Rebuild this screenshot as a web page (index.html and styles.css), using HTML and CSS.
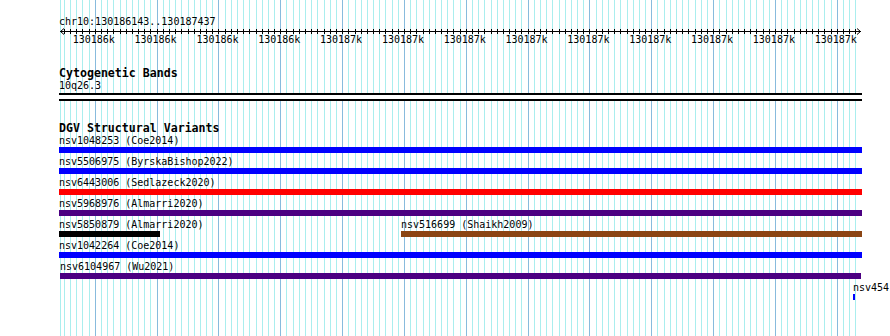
FILE: index.html
```html
<!DOCTYPE html>
<html lang="en">
<head>
<meta charset="utf-8">
<title>Genome browser</title>
<link rel="stylesheet" href="styles.css">
</head>
<body>
<div class="view">
  <svg class="grid" id="grid" width="803" height="336" aria-hidden="true"></svg>

  <div class="ruler">
    <div class="locus">chr10:130186143..130187437</div>
    <svg class="scale" id="scale" width="803" height="6" aria-hidden="true">
      <rect class="axis" x="1" y="3" width="801" height="1"></rect>
      <path class="arrow" d="M5 0.5 L1.5 3.5 L5 6.5"></path>
      <path class="arrow" d="M798 0.5 L801.5 3.5 L798 6.5"></path>
    </svg>
    <div class="ticklabels">
      <span class="ticklabel" style="left:13.7px">130186k</span>
      <span class="ticklabel" style="left:75.5px">130186k</span>
      <span class="ticklabel" style="left:137.4px">130186k</span>
      <span class="ticklabel" style="left:199.2px">130186k</span>
      <span class="ticklabel" style="left:261.0px">130187k</span>
      <span class="ticklabel" style="left:322.9px">130187k</span>
      <span class="ticklabel" style="left:384.7px">130187k</span>
      <span class="ticklabel" style="left:446.5px">130187k</span>
      <span class="ticklabel" style="left:508.3px">130187k</span>
      <span class="ticklabel" style="left:570.2px">130187k</span>
      <span class="ticklabel" style="left:632.0px">130187k</span>
      <span class="ticklabel" style="left:693.8px">130187k</span>
      <span class="ticklabel" style="left:755.7px">130187k</span>
    </div>
  </div>

  <section class="track cyto">
    <h2 class="track-title">Cytogenetic Bands</h2>
    <div class="band-name">10q26.3</div>
    <div class="band"></div>
  </section>

  <section class="track dgv">
    <h2 class="track-title">DGV Structural Variants</h2>

    <div class="row">
      <div class="feat" style="margin-left:0;width:803px">
        <div class="flabel">nsv1048253 (Coe2014)</div>
        <div class="fbar blue"></div>
      </div>
    </div>
    <div class="row">
      <div class="feat" style="margin-left:0;width:803px">
        <div class="flabel">nsv5506975 (ByrskaBishop2022)</div>
        <div class="fbar blue"></div>
      </div>
    </div>
    <div class="row">
      <div class="feat" style="margin-left:0;width:803px">
        <div class="flabel">nsv6443006 (Sedlazeck2020)</div>
        <div class="fbar red"></div>
      </div>
    </div>
    <div class="row">
      <div class="feat" style="margin-left:0;width:803px">
        <div class="flabel">nsv5968976 (Almarri2020)</div>
        <div class="fbar indigo"></div>
      </div>
    </div>
    <div class="row">
      <div class="feat" style="margin-left:0;width:101px">
        <div class="flabel">nsv5850879 (Almarri2020)</div>
        <div class="fbar black"></div>
      </div>
      <div class="feat" style="margin-left:241px;width:461px">
        <div class="flabel">nsv516699 (Shaikh2009)</div>
        <div class="fbar brown"></div>
      </div>
    </div>
    <div class="row">
      <div class="feat" style="margin-left:0;width:803px">
        <div class="flabel">nsv1042264 (Coe2014)</div>
        <div class="fbar blue"></div>
      </div>
    </div>
    <div class="row">
      <div class="feat" style="margin-left:1px;width:801px">
        <div class="flabel">nsv6104967 (Wu2021)</div>
        <div class="fbar indigo"></div>
      </div>
    </div>
    <div class="row">
      <div class="feat" style="margin-left:794px;width:2px">
        <div class="flabel">nsv454</div>
        <div class="fbar blue"></div>
      </div>
    </div>
  </section>
</div>
<script src="script.js"></script>
</body>
</html>
```

FILE: styles.css
```css
html, body {
  margin: 0;
  padding: 0;
  background: #ffffff;
  overflow: hidden;
}

body {
  font-family: "DejaVu Sans Mono", "Liberation Mono", monospace;
  font-size: 10px;
  color: #000000;
  width: 890px;
  height: 336px;
}

.view {
  position: relative;
  z-index: 0;
  margin-left: 59px;
  width: 803px;
  height: 336px;
  padding-top: 16px;
  box-sizing: border-box;
}

.grid {
  position: absolute;
  left: 0;
  top: 0;
  z-index: -1;
}

.grid .minor { fill: #aaeeee; }
.grid .major { fill: #88bbdd; }

.locus {
  height: 12px;
  line-height: 12px;
  white-space: nowrap;
}

.scale {
  display: block;
  overflow: visible;
}

.scale .axis,
.scale .tick { fill: #000000; }

.scale .arrow {
  fill: none;
  stroke: #000000;
  stroke-width: 1;
}

.ticklabels {
  position: relative;
  height: 12px;
  line-height: 12px;
}

.ticklabel {
  position: absolute;
  top: 0;
  white-space: nowrap;
}

.track-title {
  margin: 0;
  height: 12px;
  line-height: 12px;
  font-size: 11.6px;
  font-weight: bold;
  white-space: nowrap;
}

.cyto {
  margin-top: 21px;
}

.band-name {
  margin-top: 1px;
  height: 12px;
  line-height: 12px;
}

.band {
  margin-top: 1px;
  height: 4px;
  background: #ffffff;
  border-top: 2px solid #000000;
  border-bottom: 2px solid #000000;
}

.dgv {
  margin-top: 21px;
}

.dgv .track-title {
  margin-bottom: 1px;
}

.row {
  display: flex;
  margin-bottom: 3px;
}

.feat {
  flex: none;
  display: flex;
  flex-direction: column;
}

.flabel {
  height: 11px;
  line-height: 11px;
  white-space: nowrap;
}

.fbar {
  margin-top: 1px;
  height: 6px;
}

.fbar.blue { background: #0000ff; }
.fbar.red { background: #ff0000; }
.fbar.indigo { background: #4b0082; }
.fbar.black { background: #000000; }
.fbar.brown { background: #8b4513; }
```

FILE: script.js
```js
(function () {
  var NS = "http://www.w3.org/2000/svg";
  var ORIGIN = 59;
  var FIRST = 64.4;
  var STEP = 6.1833;
  var COUNT = 129;
  var grid = document.getElementById("grid");
  var scale = document.getElementById("scale");

  function rect(svg, x, y, w, h, cls) {
    var r = document.createElementNS(NS, "rect");
    r.setAttribute("x", x);
    r.setAttribute("y", y);
    r.setAttribute("width", w);
    r.setAttribute("height", h);
    r.setAttribute("class", cls);
    svg.appendChild(r);
  }

  rect(grid, 1, 0, 1, 336, "minor");
  for (var i = 0; i < COUNT; i++) {
    var x = Math.floor(FIRST + STEP * i) - ORIGIN;
    var major = (i - 5) % 10 === 0;
    rect(grid, x, 0, 1, 336, major ? "major" : "minor");
    rect(scale, x, 1, 1, 5, "tick");
  }
})();
```
